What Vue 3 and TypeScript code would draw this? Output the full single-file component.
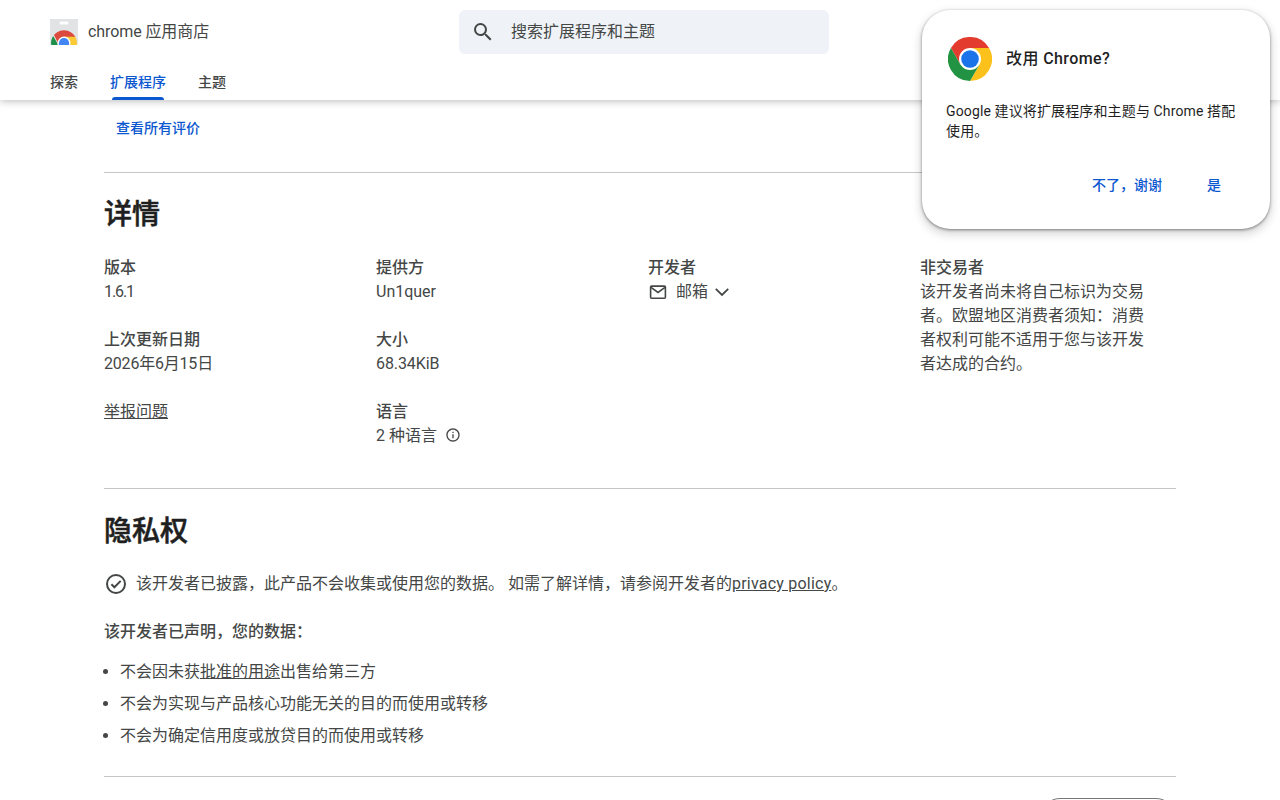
<script setup lang="ts">
interface Tab { label: string; active?: boolean }

const tabs: Tab[] = [
  { label: '探索' },
  { label: '扩展程序', active: true },
  { label: '主题' },
]
</script>

<template>
  <div class="page">
    <header class="header">
      <div class="topbar">
        <a class="brand">
          <svg class="brand-logo" width="28" height="26" viewBox="0 0 28 26">
            <defs>
              <clipPath id="arch"><circle cx="14" cy="24.2" r="12.9" /></clipPath>
            </defs>
            <path fill="#e2e3e4" d="M0 0h28v24.2q0 1.8-1.8 1.8H1.8Q0 26 0 24.2z" />
            <rect x="9.5" y="2.4" width="9" height="3.2" rx="1.6" fill="#fff" />
            <g clip-path="url(#arch)">
              <path fill="#dc4a3d" d="M0 8h28v10H14L9 26z" />
              <path fill="#1e8e48" d="M0 13.5l3 3.2L8.4 26H0z" />
              <path fill="#fbc934" d="M14 17.8h14V26H14z" />
            </g>
            <path fill="#fff" d="M7.6 26v-2a6.4 6.4 0 0 1 12.8 0v2z" />
            <path fill="#4285f4" d="M8.9 26v-2a5.1 5.1 0 0 1 10.2 0v2z" />
          </svg>
          <span class="brand-name">chrome 应用商店</span>
        </a>
        <div class="search">
          <svg width="24" height="24" viewBox="0 0 24 24" fill="#444746">
            <path d="M15.5 14h-.79l-.28-.27A6.47 6.47 0 0 0 16 9.5 6.5 6.5 0 1 0 9.5 16c1.61 0 3.09-.59 4.23-1.57l.27.28v.79l5 4.99L20.49 19l-4.99-5zm-6 0C7.01 14 5 11.99 5 9.5S7.01 5 9.5 5 14 7.01 14 9.5 11.99 14 9.5 14z" />
          </svg>
          <span>搜索扩展程序和主题</span>
        </div>
      </div>
      <nav class="tabs">
        <a v-for="tab in tabs" :key="tab.label" class="tab" :class="{ active: tab.active }">{{ tab.label }}</a>
      </nav>
    </header>

    <main class="content">
      <a class="all-reviews">查看所有评价</a>

      <section class="section details">
        <h2>详情</h2>
        <div class="columns">
          <div class="column">
            <div class="item"><b>版本</b><span class="v-num">1.6.1</span></div>
            <div class="item"><b>上次更新日期</b><span class="v-date">2026年6月15日</span></div>
            <div class="item"><a class="link">举报问题</a></div>
          </div>
          <div class="column">
            <div class="item"><b>提供方</b><span>Un1quer</span></div>
            <div class="item"><b>大小</b><span class="v-size">68.34KiB</span></div>
            <div class="item">
              <b>语言</b>
              <span class="languages">2 种语言
                <svg width="16" height="16" viewBox="0 0 24 24" fill="#444746">
                  <path d="M11 7h2v2h-2zm0 4h2v6h-2zm1-9C6.48 2 2 6.48 2 12s4.48 10 10 10 10-4.48 10-10S17.52 2 12 2zm0 18c-4.41 0-8-3.59-8-8s3.59-8 8-8 8 3.59 8 8-3.59 8-8 8z" />
                </svg>
              </span>
            </div>
          </div>
          <div class="column">
            <div class="item">
              <b>开发者</b>
              <span class="mail">
                <svg width="20" height="20" viewBox="0 0 20 20" fill="none" stroke="#444746" stroke-width="1.6">
                  <rect x="2.6" y="4.1" width="14.8" height="12.2" rx="1" />
                  <path d="M3 5.4l7 5 7-5" />
                </svg>
                <span>邮箱</span>
                <svg class="chevron" width="16" height="16" viewBox="0 0 16 16" fill="none" stroke="#444746" stroke-width="1.8">
                  <path d="M1.8 4.8L8 11l6.2-6.2" />
                </svg>
              </span>
            </div>
          </div>
          <div class="column">
            <div class="item"><b>非交易者</b><p>该开发者尚未将自己标识为交易者。欧盟地区消费者须知：消费者权利可能不适用于您与该开发者达成的合约。</p></div>
          </div>
        </div>
      </section>

      <section class="section privacy">
        <h2>隐私权</h2>
        <div class="disclosure">
          <svg width="24" height="24" viewBox="0 0 24 24" fill="none" stroke="#444746" stroke-width="2">
            <circle cx="12" cy="12" r="9" />
            <path d="M7.4 12.3l3 3 6.3-6.4" />
          </svg>
          <p>该开发者已披露，此产品不会收集或使用您的数据。 如需了解详情，请参阅开发者的<a class="link policy">privacy policy</a>。</p>
        </div>
        <h3>该开发者已声明，您的数据：</h3>
        <ul>
          <li>不会因未获<a class="link">批准的用途</a>出售给第三方</li>
          <li>不会为实现与产品核心功能无关的目的而使用或转移</li>
          <li>不会为确定信用度或放贷目的而使用或转移</li>
        </ul>
      </section>

      <section class="section related">
        <button class="pill" type="button"></button>
      </section>
    </main>

    <aside class="promo">
      <div class="promo-head">
        <svg width="44" height="44" viewBox="0 0 48 48">
          <circle cx="24" cy="24" r="24" fill="#fff" />
          <path fill="#e33b2e" d="M3.2 12A24 24 0 0 1 44.8 12H24L13.6 30z" />
          <path fill="#fcc21b" d="M44.8 12A24 24 0 0 1 24 48L34.4 30 24 12z" />
          <path fill="#229342" d="M3.2 12A24 24 0 0 0 24 48L34.4 30H13.6z" />
          <circle cx="24" cy="24" r="12" fill="#fff" />
          <circle cx="24" cy="24" r="9.6" fill="#1a73e8" />
        </svg>
        <span class="promo-title">改用 Chrome?</span>
      </div>
      <p class="promo-text">Google 建议将扩展程序和主题与 Chrome 搭配使用。</p>
      <div class="promo-actions">
        <a>不了，谢谢</a>
        <a>是</a>
      </div>
    </aside>
  </div>
</template>

<style>
body { background: #fff; }
</style>

<style scoped>
.page {
  position: relative;
  width: 1280px;
  height: 800px;
  overflow: hidden;
  box-sizing: border-box;
  display: flex;
  flex-direction: column;
  background: #fff;
  color: #444746;
  font: 400 16px/24px Roboto, "Noto Sans CJK SC", sans-serif;
}
.page svg { flex: none; display: block; }
h2, h3, p, ul { margin: 0; padding: 0; }
.header {
  position: relative;
  flex: none;
  height: 100px;
  background: #fff;
  box-shadow: 0 1px 8px rgba(0, 0, 0, .28);
}
.topbar { display: flex; height: 64px; }
.brand { display: flex; align-items: center; width: 409px; padding-left: 50px; }
.brand-name { margin-left: 10px; letter-spacing: -.09px; }
.search {
  display: flex;
  align-items: center;
  gap: 16px;
  box-sizing: border-box;
  width: 370px;
  height: 44px;
  margin-top: 10px;
  padding-left: 12px;
  border-radius: 6px;
  background: #eff3f8;
}
.tabs { display: flex; gap: 32px; height: 36px; padding-left: 50px; font-size: 14px; font-weight: 500; line-height: 36px; }
.tab { position: relative; }
.tab.active { color: #0b57d0; }
.tab.active::after {
  content: "";
  position: absolute;
  left: 2px;
  right: 2px;
  bottom: 0;
  height: 3px;
  border-radius: 3px 3px 0 0;
  background: #0b57d0;
}
.content { width: 1072px; margin: 0 auto; }
.all-reviews { display: block; height: 72px; padding-left: 12px; box-sizing: border-box; color: #0b57d0; font-size: 14px; font-weight: 500; line-height: 56px; }
.section { box-sizing: border-box; border-top: 1px solid #c4c7c5; }
.details { height: 316px; }
.privacy { height: 288px; }
h2 { height: 83px; box-sizing: border-box; padding-top: 24px; color: #1f1f1f; font-size: 28px; font-weight: 500; line-height: 36px; -webkit-text-stroke: .55px #1f1f1f; }
.privacy h2 { padding-top: 25px; }
.columns { display: grid; grid-template-columns: repeat(4, 224px); column-gap: 48px; }
.column { display: flex; flex-direction: column; gap: 24px; }
.item { display: flex; flex-direction: column; align-items: flex-start; }
.item b { font-weight: 500; }
.v-num { letter-spacing: -1.1px; }
.v-date { letter-spacing: -.2px; }
.v-size { letter-spacing: -.1px; }
.link { text-decoration: underline; text-underline-offset: 1px; }
.policy { letter-spacing: .22px; }
.languages { display: flex; align-items: center; gap: 8px; }
.languages svg { margin-bottom: 2px; }
.mail { display: flex; align-items: center; gap: 8px; }
.mail .chevron { margin-left: -2px; }
.disclosure { display: flex; gap: 8px; }
h3 { margin-top: 24px; font-size: 16px; font-weight: 500; line-height: 24px; }
ul { margin-top: 12px; padding-left: 16px; list-style: none; }
li { position: relative; line-height: 32px; }
li::before {
  content: "";
  position: absolute;
  left: -17px;
  top: 13px;
  width: 5px;
  height: 5px;
  border-radius: 50%;
  background: #444746;
}
.related { display: flex; justify-content: flex-end; padding-top: 21px; }
.pill { width: 136px; height: 40px; border: 1px solid #747775; border-radius: 20px; background: #fff; }
.promo {
  position: absolute;
  top: 10px;
  right: 10px;
  box-sizing: border-box;
  width: 348px;
  height: 219px;
  padding: 27px 24px 0;
  border-radius: 28px;
  background: #fff;
  color: #1f1f1f;
  box-shadow: 0 1px 3px rgba(0, 0, 0, .45), 0 4px 8px 2px rgba(0, 0, 0, .14);
}
.promo-head { display: flex; align-items: center; gap: 14px; padding-left: 2px; }
.promo-title { font-weight: 500; letter-spacing: .4px; }
.promo-text { margin-top: 20px; padding-right: 4px; font-size: 14px; line-height: 20px; letter-spacing: .13px; }
.promo-actions { display: flex; justify-content: flex-end; gap: 45px; margin-top: 34px; padding-right: 25px; color: #0b57d0; font-size: 14px; font-weight: 500; line-height: 20px; }
</style>
